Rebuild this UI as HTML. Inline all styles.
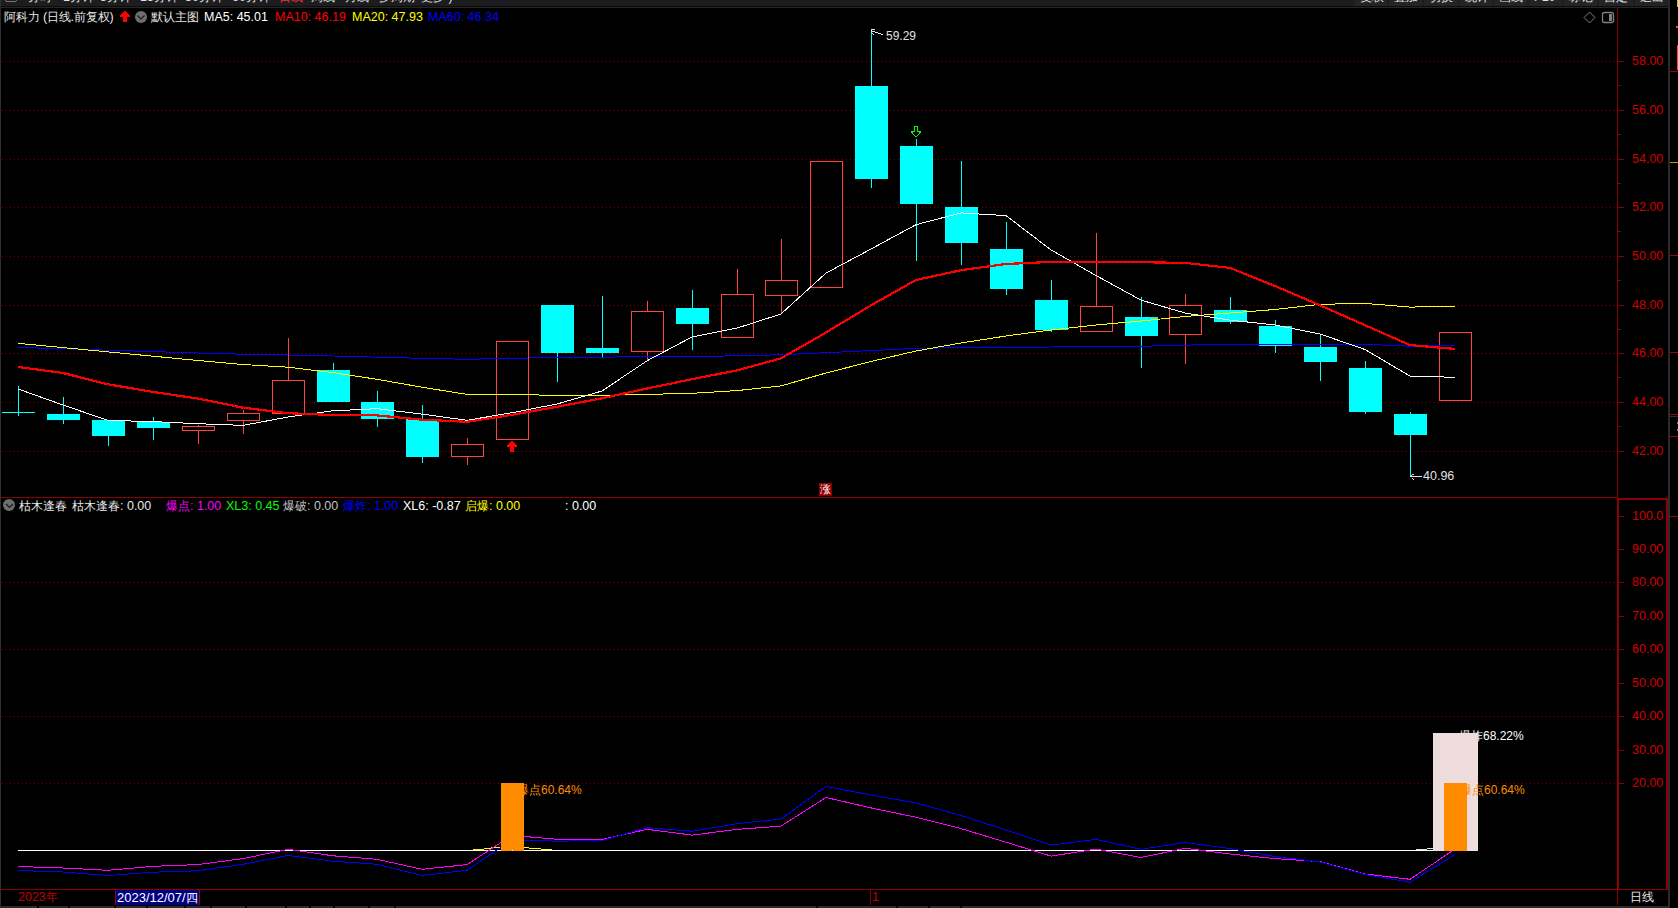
<!DOCTYPE html>
<html><head><meta charset="utf-8"><style>
html,body{margin:0;padding:0;background:#000;width:1678px;height:908px;overflow:hidden;position:relative}
body{font-family:"Liberation Sans",sans-serif}
.t{position:absolute;white-space:nowrap;line-height:1}
.ax{color:#d00000;font-size:12.5px}
.c{font-size:12px}
</style></head><body>
<div style="position:absolute;left:0;top:0;width:1678px;height:6px;background:#1d1d1f"></div>
<div style="position:absolute;left:0;top:6px;width:1678px;height:1px;background:#0c0c0c"></div>
<div style="position:absolute;left:0;top:7px;width:1668px;height:1px;background:#262626"></div>
<div style="position:absolute;left:0;top:0;width:1px;height:908px;background:#2e2e2e"></div>
<div style="position:absolute;left:1668px;top:0;width:2px;height:908px;background:#2a2a2a"></div>
<svg width="1678" height="908" style="position:absolute;left:0;top:0" shape-rendering="crispEdges">
<line x1="2" y1="61.5" x2="1616" y2="61.5" stroke="#800000" stroke-width="1" stroke-dasharray="1 3"/>
<line x1="2" y1="110.5" x2="1616" y2="110.5" stroke="#800000" stroke-width="1" stroke-dasharray="1 3"/>
<line x1="2" y1="159.5" x2="1616" y2="159.5" stroke="#800000" stroke-width="1" stroke-dasharray="1 3"/>
<line x1="2" y1="207.5" x2="1616" y2="207.5" stroke="#800000" stroke-width="1" stroke-dasharray="1 3"/>
<line x1="2" y1="256.5" x2="1616" y2="256.5" stroke="#800000" stroke-width="1" stroke-dasharray="1 3"/>
<line x1="2" y1="305.5" x2="1616" y2="305.5" stroke="#800000" stroke-width="1" stroke-dasharray="1 3"/>
<line x1="2" y1="353.5" x2="1616" y2="353.5" stroke="#800000" stroke-width="1" stroke-dasharray="1 3"/>
<line x1="2" y1="402.5" x2="1616" y2="402.5" stroke="#800000" stroke-width="1" stroke-dasharray="1 3"/>
<line x1="2" y1="451.5" x2="1616" y2="451.5" stroke="#800000" stroke-width="1" stroke-dasharray="1 3"/>
<rect x="1618" y="61" width="6" height="1" fill="#8b0000"/>
<rect x="1618" y="110" width="6" height="1" fill="#8b0000"/>
<rect x="1618" y="159" width="6" height="1" fill="#8b0000"/>
<rect x="1618" y="207" width="6" height="1" fill="#8b0000"/>
<rect x="1618" y="256" width="6" height="1" fill="#8b0000"/>
<rect x="1618" y="305" width="6" height="1" fill="#8b0000"/>
<rect x="1618" y="353" width="6" height="1" fill="#8b0000"/>
<rect x="1618" y="402" width="6" height="1" fill="#8b0000"/>
<rect x="1618" y="451" width="6" height="1" fill="#8b0000"/>
<rect x="1618" y="85" width="3" height="1" fill="#8b0000"/>
<rect x="1618" y="134" width="3" height="1" fill="#8b0000"/>
<rect x="1618" y="183" width="3" height="1" fill="#8b0000"/>
<rect x="1618" y="231" width="3" height="1" fill="#8b0000"/>
<rect x="1618" y="280" width="3" height="1" fill="#8b0000"/>
<rect x="1618" y="329" width="3" height="1" fill="#8b0000"/>
<rect x="1618" y="377" width="3" height="1" fill="#8b0000"/>
<rect x="1618" y="426" width="3" height="1" fill="#8b0000"/>
<rect x="1619" y="516" width="5" height="1" fill="#8b0000"/>
<rect x="1619" y="549" width="5" height="1" fill="#8b0000"/>
<line x1="2" y1="582.5" x2="1616" y2="582.5" stroke="#800000" stroke-width="1" stroke-dasharray="1 3"/>
<rect x="1619" y="582" width="5" height="1" fill="#8b0000"/>
<rect x="1619" y="616" width="5" height="1" fill="#8b0000"/>
<line x1="2" y1="649.5" x2="1616" y2="649.5" stroke="#800000" stroke-width="1" stroke-dasharray="1 3"/>
<rect x="1619" y="649" width="5" height="1" fill="#8b0000"/>
<rect x="1619" y="683" width="5" height="1" fill="#8b0000"/>
<line x1="2" y1="716.5" x2="1616" y2="716.5" stroke="#800000" stroke-width="1" stroke-dasharray="1 3"/>
<rect x="1619" y="716" width="5" height="1" fill="#8b0000"/>
<rect x="1619" y="750" width="5" height="1" fill="#8b0000"/>
<line x1="2" y1="783.5" x2="1616" y2="783.5" stroke="#800000" stroke-width="1" stroke-dasharray="1 3"/>
<rect x="1619" y="783" width="5" height="1" fill="#8b0000"/>
<rect x="1617" y="8" width="1" height="490" fill="#8b0000"/>
<rect x="1" y="497" width="1617" height="1" fill="#8b0000"/>
<rect x="1617" y="498" width="51" height="2" fill="#8b0000"/>
<rect x="1617" y="498" width="2" height="392" fill="#8b0000"/>
<rect x="1666" y="498" width="2" height="392" fill="#8b0000"/>
<rect x="1" y="889" width="1667" height="1" fill="#8b0000"/>
<rect x="1617" y="889" width="1" height="16" fill="#8b0000"/>
<rect x="870" y="889" width="1" height="16" fill="#8b0000"/>
<rect x="18" y="386" width="1" height="30" fill="#00ffff"/>
<rect x="2" y="412" width="33" height="1" fill="#00ffff"/>
<rect x="63" y="397" width="1" height="17" fill="#00ffff"/>
<rect x="63" y="420" width="1" height="4" fill="#00ffff"/>
<rect x="47" y="414" width="33" height="6" fill="#00ffff"/>
<rect x="108" y="436" width="1" height="10" fill="#00ffff"/>
<rect x="92" y="420" width="33" height="16" fill="#00ffff"/>
<rect x="153" y="417" width="1" height="5" fill="#00ffff"/>
<rect x="153" y="428" width="1" height="12" fill="#00ffff"/>
<rect x="137" y="422" width="33" height="6" fill="#00ffff"/>
<rect x="198" y="425" width="1" height="1" fill="#ff4242"/>
<rect x="198" y="430" width="1" height="14" fill="#ff4242"/>
<rect x="182.5" y="426.5" width="32" height="4" fill="none" stroke="#ff4242" stroke-width="1"/>
<rect x="243" y="410" width="1" height="3" fill="#ff4242"/>
<rect x="243" y="420" width="1" height="14" fill="#ff4242"/>
<rect x="227.5" y="413.5" width="32" height="7" fill="none" stroke="#ff4242" stroke-width="1"/>
<rect x="288" y="338" width="1" height="42" fill="#ff4242"/>
<rect x="272.5" y="380.5" width="32" height="33" fill="none" stroke="#ff4242" stroke-width="1"/>
<rect x="333" y="363" width="1" height="7" fill="#00ffff"/>
<rect x="317" y="370" width="33" height="32" fill="#00ffff"/>
<rect x="377" y="391" width="1" height="11" fill="#00ffff"/>
<rect x="377" y="419" width="1" height="8" fill="#00ffff"/>
<rect x="361" y="402" width="33" height="17" fill="#00ffff"/>
<rect x="422" y="405" width="1" height="14" fill="#00ffff"/>
<rect x="422" y="457" width="1" height="6" fill="#00ffff"/>
<rect x="406" y="419" width="33" height="38" fill="#00ffff"/>
<rect x="467" y="438" width="1" height="6" fill="#ff4242"/>
<rect x="467" y="456" width="1" height="9" fill="#ff4242"/>
<rect x="451.5" y="444.5" width="32" height="12" fill="none" stroke="#ff4242" stroke-width="1"/>
<rect x="496.5" y="341.5" width="32" height="98" fill="none" stroke="#ff4242" stroke-width="1"/>
<rect x="557" y="353" width="1" height="29" fill="#00ffff"/>
<rect x="541" y="305" width="33" height="48" fill="#00ffff"/>
<rect x="602" y="296" width="1" height="52" fill="#00ffff"/>
<rect x="602" y="353" width="1" height="4" fill="#00ffff"/>
<rect x="586" y="348" width="33" height="5" fill="#00ffff"/>
<rect x="647" y="301" width="1" height="10" fill="#ff4242"/>
<rect x="647" y="351" width="1" height="9" fill="#ff4242"/>
<rect x="631.5" y="311.5" width="32" height="40" fill="none" stroke="#ff4242" stroke-width="1"/>
<rect x="692" y="290" width="1" height="18" fill="#00ffff"/>
<rect x="692" y="324" width="1" height="26" fill="#00ffff"/>
<rect x="676" y="308" width="33" height="16" fill="#00ffff"/>
<rect x="737" y="269" width="1" height="25" fill="#ff4242"/>
<rect x="721.5" y="294.5" width="32" height="43" fill="none" stroke="#ff4242" stroke-width="1"/>
<rect x="781" y="239" width="1" height="41" fill="#ff4242"/>
<rect x="781" y="295" width="1" height="18" fill="#ff4242"/>
<rect x="765.5" y="280.5" width="32" height="15" fill="none" stroke="#ff4242" stroke-width="1"/>
<rect x="810.5" y="161.5" width="32" height="126" fill="none" stroke="#ff4242" stroke-width="1"/>
<rect x="871" y="31" width="1" height="55" fill="#00ffff"/>
<rect x="871" y="179" width="1" height="9" fill="#00ffff"/>
<rect x="855" y="86" width="33" height="93" fill="#00ffff"/>
<rect x="916" y="139" width="1" height="7" fill="#00ffff"/>
<rect x="916" y="204" width="1" height="57" fill="#00ffff"/>
<rect x="900" y="146" width="33" height="58" fill="#00ffff"/>
<rect x="961" y="161" width="1" height="46" fill="#00ffff"/>
<rect x="961" y="243" width="1" height="22" fill="#00ffff"/>
<rect x="945" y="207" width="33" height="36" fill="#00ffff"/>
<rect x="1006" y="222" width="1" height="27" fill="#00ffff"/>
<rect x="1006" y="289" width="1" height="6" fill="#00ffff"/>
<rect x="990" y="249" width="33" height="40" fill="#00ffff"/>
<rect x="1051" y="280" width="1" height="20" fill="#00ffff"/>
<rect x="1051" y="330" width="1" height="2" fill="#00ffff"/>
<rect x="1035" y="300" width="33" height="30" fill="#00ffff"/>
<rect x="1096" y="233" width="1" height="73" fill="#ff4242"/>
<rect x="1080.5" y="306.5" width="32" height="25" fill="none" stroke="#ff4242" stroke-width="1"/>
<rect x="1141" y="297" width="1" height="20" fill="#00ffff"/>
<rect x="1141" y="336" width="1" height="32" fill="#00ffff"/>
<rect x="1125" y="317" width="33" height="19" fill="#00ffff"/>
<rect x="1185" y="294" width="1" height="11" fill="#ff4242"/>
<rect x="1185" y="334" width="1" height="30" fill="#ff4242"/>
<rect x="1169.5" y="305.5" width="32" height="29" fill="none" stroke="#ff4242" stroke-width="1"/>
<rect x="1230" y="297" width="1" height="13" fill="#00ffff"/>
<rect x="1230" y="322" width="1" height="2" fill="#00ffff"/>
<rect x="1214" y="310" width="33" height="12" fill="#00ffff"/>
<rect x="1275" y="320" width="1" height="6" fill="#00ffff"/>
<rect x="1275" y="346" width="1" height="7" fill="#00ffff"/>
<rect x="1259" y="326" width="33" height="20" fill="#00ffff"/>
<rect x="1320" y="334" width="1" height="13" fill="#00ffff"/>
<rect x="1320" y="362" width="1" height="19" fill="#00ffff"/>
<rect x="1304" y="347" width="33" height="15" fill="#00ffff"/>
<rect x="1365" y="361" width="1" height="7" fill="#00ffff"/>
<rect x="1365" y="412" width="1" height="2" fill="#00ffff"/>
<rect x="1349" y="368" width="33" height="44" fill="#00ffff"/>
<rect x="1410" y="412" width="1" height="2" fill="#00ffff"/>
<rect x="1410" y="435" width="1" height="42" fill="#00ffff"/>
<rect x="1394" y="414" width="33" height="21" fill="#00ffff"/>
<rect x="1439.5" y="332.5" width="32" height="68" fill="none" stroke="#ff4242" stroke-width="1"/>
<g>
<polyline points="18,347.4 63,348.8 108,350.2 153,351.6 198,353.0 243,354.2 288,355.0 333,356.0 377,357.2 422,358.3 467,359.3 512,358.3 557,357.5 602,357.2 647,356.5 692,356.8 737,355.7 781,354.8 826,352.7 871,350.6 916,348.3 961,347.7 1006,347.5 1051,347.0 1096,346.5 1141,346.3 1185,345.1 1230,344.4 1275,344.4 1320,344.3 1365,344.3 1410,346.2 1455,345.4" fill="none" stroke="#0000ff" stroke-width="1"/>
<polyline points="18,343.3 63,347.6 108,351.9 153,356.2 198,360.5 243,364.5 288,367.2 333,372.6 377,379.3 422,387.2 467,394.4 512,394.4 557,395.4 602,395.4 647,394.4 692,393.3 737,390.6 781,385.9 826,373.0 871,361.5 916,351.0 961,343.0 1006,336.0 1051,330.0 1096,325.0 1141,321.0 1185,316.5 1230,313.0 1275,309.5 1320,304.3 1365,303.4 1410,307.1 1455,306.3" fill="none" stroke="#ffff00" stroke-width="1"/>
<polyline points="18,389.0 63,405.0 108,420.4 153,421.6 198,423.7 243,425.4 288,417.0 333,410.8 377,408.7 422,414.1 467,420.3 512,412.7 557,404.0 602,391.0 647,360.8 692,337.0 737,328.1 781,314.0 826,273.1 871,249.0 916,224.7 961,212.9 1006,215.6 1051,249.9 1096,275.5 1141,300.1 1185,313.0 1230,320.1 1275,325.0 1320,334.0 1365,349.5 1410,376.1 1455,377.3" fill="none" stroke="#ffffff" stroke-width="1"/>
<polyline points="18,367.0 63,373.0 108,384.3 153,391.9 198,398.6 243,407.7 288,413.2 333,415.0 377,415.4 422,419.7 467,421.8 512,414.8 557,406.8 602,398.3 647,388.5 692,379.2 737,370.4 781,358.4 826,332.5 871,305.3 916,280.0 961,270.2 1006,264.0 1051,261.9 1096,261.9 1141,262.2 1185,262.9 1230,267.9 1275,286.0 1320,305.3 1365,325.2 1410,345.1 1455,348.9" fill="none" stroke="#ff0000" stroke-width="2.2"/>
</g>
<rect x="871" y="29" width="1" height="4" fill="#e8e8e8"/>
<rect x="872" y="29" width="3" height="1" fill="#e8e8e8"/>
<rect x="872" y="31" width="3" height="1" fill="#e8e8e8"/>
<rect x="875" y="32" width="3" height="1" fill="#e8e8e8"/>
<rect x="878" y="33" width="3" height="1" fill="#e8e8e8"/>
<rect x="881" y="34" width="2" height="1" fill="#e8e8e8"/>
<rect x="872" y="33" width="1" height="1" fill="#e8e8e8"/>
<rect x="873" y="34" width="1" height="1" fill="#e8e8e8"/>
<rect x="1410" y="476" width="12" height="1" fill="#e8e8e8"/>
<rect x="1411" y="475" width="1" height="2" fill="#e8e8e8"/>
<rect x="1412" y="474" width="2" height="1" fill="#e8e8e8"/>
<rect x="1412" y="478" width="1" height="1" fill="#e8e8e8"/>
<rect x="1413" y="479" width="1" height="1" fill="#e8e8e8"/>
<rect x="511" y="441" width="2" height="1" fill="#ff0000"/>
<rect x="510" y="442" width="4" height="1" fill="#ff0000"/>
<rect x="509" y="443" width="6" height="1" fill="#ff0000"/>
<rect x="508" y="444" width="8" height="1" fill="#ff0000"/>
<rect x="507" y="445" width="10" height="2" fill="#ff0000"/>
<rect x="510" y="447" width="4" height="5" fill="#ff0000"/>
<rect x="914" y="126" width="4" height="1" fill="#00ff00"/>
<rect x="914" y="127" width="1" height="4" fill="#00ff00"/>
<rect x="917" y="127" width="1" height="4" fill="#00ff00"/>
<rect x="911" y="131" width="4" height="1" fill="#00ff00"/>
<rect x="917" y="131" width="4" height="1" fill="#00ff00"/>
<rect x="911" y="132" width="2" height="1" fill="#00ff00"/>
<rect x="919" y="132" width="2" height="1" fill="#00ff00"/>
<rect x="912" y="133" width="1" height="1" fill="#00ff00"/>
<rect x="919" y="133" width="1" height="1" fill="#00ff00"/>
<rect x="913" y="134" width="1" height="1" fill="#00ff00"/>
<rect x="918" y="134" width="1" height="1" fill="#00ff00"/>
<rect x="914" y="135" width="1" height="1" fill="#00ff00"/>
<rect x="917" y="135" width="1" height="1" fill="#00ff00"/>
<rect x="915" y="136" width="2" height="1" fill="#00ff00"/>
<rect x="18" y="850" width="1415" height="1" fill="#ffffff"/>
<rect x="1416" y="849" width="11" height="1" fill="#e0e0e0"/>
<rect x="1427" y="848" width="6" height="1" fill="#e0e0e0"/>
<rect x="473" y="849" width="11" height="1" fill="#ffff00"/>
<rect x="484" y="848" width="7" height="1" fill="#ffff00"/>
<rect x="491" y="847" width="10" height="1" fill="#ffff00"/>
<rect x="524" y="847" width="5" height="1" fill="#ffff00"/>
<rect x="529" y="848" width="12" height="1" fill="#ffff00"/>
<rect x="541" y="849" width="11" height="1" fill="#ffff00"/>
<g>
<polyline points="18,866.5 63,868.0 108,870.3 153,866.3 198,864.6 243,858.6 288,849.3 333,855.8 377,859.3 422,869.3 467,864.6 512,835.4 557,839.3 602,839.5 647,829.3 692,835.1 737,829.4 781,826.1 826,797.5 871,807.9 916,817.2 961,828.6 1006,842.2 1051,856.1 1096,849.1 1141,857.5 1185,848.3 1230,854.0 1275,858.6 1320,861.6 1365,874.0 1410,879.3 1455,849.0" fill="none" stroke="#ff00ff" stroke-width="1"/>
<polyline points="18,870.5 63,872.0 108,875.5 153,872.2 198,870.8 243,864.3 288,855.5 333,861.2 377,864.3 422,875.5 467,870.3 512,839.6 557,841.2 602,840.5 647,827.6 692,831.2 737,823.6 781,819.1 826,786.4 871,795.0 916,802.9 961,815.5 1006,830.0 1051,845.1 1096,839.4 1141,849.3 1185,842.5 1230,848.6 1275,856.5 1320,862.0 1365,874.5 1410,882.3 1455,854.5" fill="none" stroke="#0000ff" stroke-width="1"/>
</g>
</svg>
<div class="t" style="left:4px;top:11px;color:#e8e8e8;font-size:12.5px;letter-spacing:-0.15px"><span class="c">阿科力</span> (<span class="c">日线</span>.<span class="c">前复权</span>)</div>
<div style="position:absolute;left:135px;top:11px;width:12px;height:12px;border-radius:50%;background:#6e6e6e"></div>
<svg style="position:absolute;left:0;top:0" width="200" height="30"><path d="M137.5,15.5 L141,19 L144.5,15.5" fill="none" stroke="#1a1a1a" stroke-width="1.2"/><g shape-rendering="crispEdges" fill="#ff0000"><rect x="124" y="11" width="2" height="1"/><rect x="123" y="12" width="4" height="1"/><rect x="122" y="13" width="6" height="1"/><rect x="121" y="14" width="8" height="1"/><rect x="120" y="15" width="10" height="2"/><rect x="123" y="17" width="4" height="5"/></g></svg>
<div class="t" style="left:151px;top:11px;color:#e8e8e8;font-size:12.5px;"><span class="c">默认主图</span></div>
<div class="t" style="left:204px;top:11px;color:#ffffff;font-size:12.5px;">MA5: 45.01</div>
<div class="t" style="left:275px;top:11px;color:#ff0000;font-size:12.5px;">MA10: 46.19</div>
<div class="t" style="left:352px;top:11px;color:#ffff00;font-size:12.5px;">MA20: 47.93</div>
<div class="t" style="left:428px;top:11px;color:#0000ff;font-size:12.5px;">MA60: 46.34</div>
<svg style="position:absolute;left:1575px;top:8px" width="45" height="20"><path d="M14.5,4 L20,9.5 L14.5,15 L9,9.5 Z" fill="none" stroke="#808080" stroke-width="1"/><rect x="27.5" y="4.5" width="11" height="10" rx="2" fill="none" stroke="#808080" stroke-width="1.3"/><rect x="34" y="6" width="3" height="7" fill="#808080"/></svg>
<div class="t ax" style="left:1632px;top:55px">58.00</div>
<div class="t ax" style="left:1632px;top:104px">56.00</div>
<div class="t ax" style="left:1632px;top:153px">54.00</div>
<div class="t ax" style="left:1632px;top:201px">52.00</div>
<div class="t ax" style="left:1632px;top:250px">50.00</div>
<div class="t ax" style="left:1632px;top:299px">48.00</div>
<div class="t ax" style="left:1632px;top:347px">46.00</div>
<div class="t ax" style="left:1632px;top:396px">44.00</div>
<div class="t ax" style="left:1632px;top:445px">42.00</div>
<div class="t ax" style="left:1632px;top:510px">100.0</div>
<div class="t ax" style="left:1632px;top:543px">90.00</div>
<div class="t ax" style="left:1632px;top:576px">80.00</div>
<div class="t ax" style="left:1632px;top:610px">70.00</div>
<div class="t ax" style="left:1632px;top:643px">60.00</div>
<div class="t ax" style="left:1632px;top:677px">50.00</div>
<div class="t ax" style="left:1632px;top:710px">40.00</div>
<div class="t ax" style="left:1632px;top:744px">30.00</div>
<div class="t ax" style="left:1632px;top:777px">20.00</div>
<div class="t" style="left:886px;top:30px;color:#e0e0e0;font-size:12px;">59.29</div>
<div class="t" style="left:1423px;top:470px;color:#e0e0e0;font-size:12.5px;">40.96</div>
<div style="position:absolute;left:819px;top:483px;width:13px;height:13px;background:#8b0000;color:#fff;font-size:11px;line-height:13px;text-align:center;font-family:'Liberation Sans',sans-serif">涨</div>
<div style="position:absolute;left:3px;top:499px;width:12px;height:12px;border-radius:50%;background:#6e6e6e"></div>
<svg style="position:absolute;left:0;top:495px" width="20" height="20"><path d="M6,9 L9.5,12.5 L13,9" fill="none" stroke="#1a1a1a" stroke-width="1.2"/></svg>
<div class="t" style="left:19px;top:500px;color:#e8e8e8;font-size:12.5px;"><span class="c">枯木逢春</span></div>
<div class="t" style="left:72px;top:500px;color:#e8e8e8;font-size:12.5px;"><span class="c">枯木逢春</span>: 0.00</div>
<div class="t" style="left:166px;top:500px;color:#ff00ff;font-size:12.5px;"><span class="c">爆点</span>: 1.00</div>
<div class="t" style="left:226px;top:500px;color:#00ff00;font-size:12.5px;">XL3: 0.45</div>
<div class="t" style="left:283px;top:500px;color:#c0c0c0;font-size:12.5px;"><span class="c">爆破</span>: 0.00</div>
<div class="t" style="left:343px;top:500px;color:#0000ff;font-size:12.5px;"><span class="c">爆炸</span>: 1.00</div>
<div class="t" style="left:403px;top:500px;color:#ffffff;font-size:12.5px;">XL6: -0.87</div>
<div class="t" style="left:465px;top:500px;color:#ffff00;font-size:12.5px;"><span class="c">启爆</span>: 0.00</div>
<div class="t" style="left:565px;top:500px;color:#ffffff;font-size:12.5px;">: 0.00</div>
<div class="t" style="left:1459px;top:730px;color:#ffffff;font-size:12px;"><span class="c">爆炸</span>68.22%</div>
<div style="position:absolute;left:1433px;top:733px;width:45px;height:118px;background:#efdcdc"></div>
<div class="t" style="left:517px;top:784px;color:#ff8c00;font-size:12px;"><span class="c">爆点</span>60.64%</div>
<div class="t" style="left:1460px;top:784px;color:#ff8c00;font-size:12px;"><span class="c">爆点</span>60.64%</div>
<div style="position:absolute;left:501px;top:783px;width:23px;height:68px;background:#ff8c00"></div><div style="position:absolute;left:512px;top:850px;width:1px;height:1px;background:#fff"></div><div style="position:absolute;left:1444px;top:783px;width:23px;height:68px;background:#ff8c00"></div>
<div class="t" style="left:18px;top:891px;color:#c00000;font-size:12.5px;">2023<span class="c">年</span></div>
<div style="position:absolute;left:115px;top:890px;width:83px;height:15px;background:#000080;border-left:1px solid #a00000;border-right:1px solid #a00000"></div>
<div class="t" style="left:117px;top:891px;color:#ffffff;font-size:13px;">2023/12/07/<span class="c">四</span></div>
<div class="t" style="left:872px;top:891px;color:#c00000;font-size:12.5px;">1</div>
<div class="t" style="left:1630px;top:891px;color:#e8e8e8;font-size:12.5px;"><span class="c">日线</span></div>
<div style="position:absolute;left:0;top:906px;width:1668px;height:2px;background:#2a2a2a"></div>
<div style="position:absolute;left:37px;top:906px;width:2px;height:2px;background:#000"></div>
<div style="position:absolute;left:68px;top:906px;width:2px;height:2px;background:#000"></div>
<div style="position:absolute;left:114px;top:906px;width:2px;height:2px;background:#000"></div>
<div style="position:absolute;left:146px;top:906px;width:2px;height:2px;background:#000"></div>
<div style="position:absolute;left:184px;top:906px;width:2px;height:2px;background:#000"></div>
<div style="position:absolute;left:210px;top:906px;width:2px;height:2px;background:#000"></div>
<div style="position:absolute;left:245px;top:906px;width:2px;height:2px;background:#000"></div>
<div style="position:absolute;left:285px;top:906px;width:2px;height:2px;background:#000"></div>
<div style="position:absolute;left:309px;top:906px;width:2px;height:2px;background:#000"></div>
<div style="position:absolute;left:333px;top:906px;width:2px;height:2px;background:#000"></div>
<div style="position:absolute;left:368px;top:906px;width:2px;height:2px;background:#000"></div>
<div style="position:absolute;left:394px;top:906px;width:2px;height:2px;background:#000"></div>
<div style="position:absolute;left:816px;top:906px;width:2px;height:2px;background:#000"></div>
<div style="position:absolute;left:896px;top:906px;width:2px;height:2px;background:#000"></div>
<div style="position:absolute;left:928px;top:906px;width:2px;height:2px;background:#000"></div>
<div style="position:absolute;left:960px;top:906px;width:2px;height:2px;background:#000"></div>
<div style="position:absolute;left:1355px;top:0;width:32px;height:6px;background:#242426"></div>
<div style="position:absolute;left:1389px;top:0;width:33px;height:6px;background:#242426"></div>
<div style="position:absolute;left:1424px;top:0;width:34px;height:6px;background:#242426"></div>
<div style="position:absolute;left:1460px;top:0;width:32px;height:6px;background:#242426"></div>
<div style="position:absolute;left:1494px;top:0;width:33px;height:6px;background:#242426"></div>
<div style="position:absolute;left:1529px;top:0;width:33px;height:6px;background:#242426"></div>
<div style="position:absolute;left:1564px;top:0;width:33px;height:6px;background:#242426"></div>
<div style="position:absolute;left:1599px;top:0;width:34px;height:6px;background:#242426"></div>
<div style="position:absolute;left:1635px;top:0;width:32px;height:6px;background:#242426"></div>
<div style="position:absolute;left:1670px;top:0;width:8px;height:8px;background:#000"></div>
<div style="position:absolute;left:1677px;top:0;width:1px;height:7px;background:#a8e000"></div>
<div style="position:absolute;left:1676px;top:26px;width:2px;height:2px;background:#ff4040"></div>
<div style="position:absolute;left:1677px;top:45px;width:1px;height:25px;background:#ff4040"></div>
<div style="position:absolute;left:1670px;top:71px;width:8px;height:1px;background:#a00000"></div>
<div style="position:absolute;left:1670px;top:162px;width:8px;height:1px;background:#d09000"></div>
<div style="position:absolute;left:1670px;top:255px;width:8px;height:1px;background:#a00000"></div>
<div style="position:absolute;left:1677px;top:283px;width:1px;height:1px;background:#0000c0"></div>
<div style="position:absolute;left:1677px;top:302px;width:1px;height:1px;background:#0000c0"></div>
<div style="position:absolute;left:1670px;top:352px;width:8px;height:1px;background:#a00000"></div>
<div style="position:absolute;left:1670px;top:414px;width:8px;height:1px;background:#a00000"></div>
<div style="position:absolute;left:1670px;top:416px;width:8px;height:1px;background:#303030"></div>
<div style="position:absolute;left:1677px;top:422px;width:1px;height:2px;background:#4080c0"></div>
<div style="position:absolute;left:1677px;top:429px;width:1px;height:2px;background:#4080c0"></div>
<div style="position:absolute;left:1670px;top:436px;width:8px;height:1px;background:#a00000"></div>
<div style="position:absolute;left:1670px;top:516px;width:8px;height:1px;background:#a00000"></div>
<div class="t" style="left:28px;top:-9px;color:#e0e0e0;font-size:12.5px;"><span class="c">分时</span></div>
<div class="t" style="left:63px;top:-9px;color:#e0e0e0;font-size:12.5px;">1<span class="c">分钟</span></div>
<div class="t" style="left:100px;top:-9px;color:#e0e0e0;font-size:12.5px;">5<span class="c">分钟</span></div>
<div class="t" style="left:140px;top:-9px;color:#e0e0e0;font-size:12.5px;">15<span class="c">分钟</span></div>
<div class="t" style="left:185px;top:-9px;color:#e0e0e0;font-size:12.5px;">30<span class="c">分钟</span></div>
<div class="t" style="left:232px;top:-9px;color:#e0e0e0;font-size:12.5px;">60<span class="c">分钟</span></div>
<div class="t" style="left:279px;top:-9px;color:#ff3030;font-size:12.5px;"><span class="c">日线</span></div>
<div class="t" style="left:311px;top:-9px;color:#e0e0e0;font-size:12.5px;"><span class="c">周线</span></div>
<div class="t" style="left:345px;top:-9px;color:#e0e0e0;font-size:12.5px;"><span class="c">月线</span></div>
<div class="t" style="left:379px;top:-9px;color:#e0e0e0;font-size:12.5px;"><span class="c">多周期</span></div>
<div class="t" style="left:421px;top:-9px;color:#e0e0e0;font-size:12.5px;"><span class="c">更多</span> )</div>
<div style="position:absolute;left:5px;top:-6px;width:10px;height:6px;border:1px solid #777;border-radius:2px"></div>
<div class="t" style="left:1360px;top:-9px;color:#e0e0e0;font-size:12.5px;"><span class="c">复权</span></div>
<div class="t" style="left:1394px;top:-9px;color:#e0e0e0;font-size:12.5px;"><span class="c">叠加</span></div>
<div class="t" style="left:1429px;top:-9px;color:#e0e0e0;font-size:12.5px;"><span class="c">切换</span></div>
<div class="t" style="left:1465px;top:-9px;color:#e0e0e0;font-size:12.5px;"><span class="c">统计</span></div>
<div class="t" style="left:1499px;top:-9px;color:#e0e0e0;font-size:12.5px;"><span class="c">画线</span></div>
<div class="t" style="left:1534px;top:-9px;color:#e0e0e0;font-size:12.5px;">F10</div>
<div class="t" style="left:1569px;top:-9px;color:#e0e0e0;font-size:12.5px;"><span class="c">标记</span></div>
<div class="t" style="left:1604px;top:-9px;color:#e0e0e0;font-size:12.5px;"><span class="c">自定</span></div>
<div class="t" style="left:1640px;top:-9px;color:#e0e0e0;font-size:12.5px;"><span class="c">退出</span></div>
</body></html>
